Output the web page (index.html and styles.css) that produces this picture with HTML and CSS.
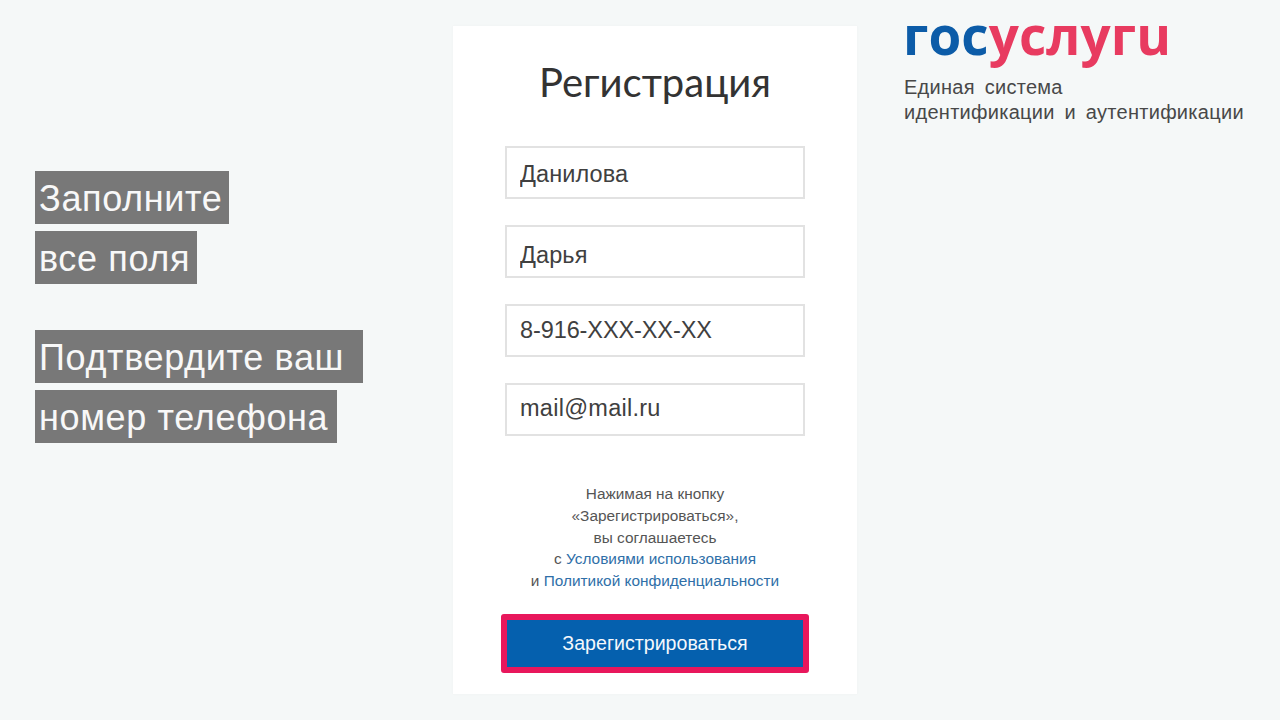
FILE: index.html
```html
<!DOCTYPE html>
<html lang="ru">
<head>
<meta charset="utf-8">
<title>Регистрация</title>
<link rel="stylesheet" href="styles.css">
</head>
<body>
<main class="page">
  <section class="notes">
    <div class="note-group">
      <span class="note">Заполните</span>
      <span class="note">все поля</span>
    </div>
    <div class="note-group">
      <span class="note note-wide">Подтвердите ваш</span>
      <span class="note note-mid">номер телефона</span>
    </div>
  </section>
  <section class="card">
    <h1 class="title">Регистрация</h1>
    <form class="fields">
      <input class="field field-down-1" value="Данилова">
      <input class="field field-down-2" value="Дарья">
      <input class="field field-phone" value="8-916-XXX-XX-XX">
      <input class="field field-mail" value="mail@mail.ru">
    </form>
    <p class="legal">Нажимая на кнопку<br>«Зарегистрироваться»,<br>вы соглашаетесь<br>с <a href="#">Условиями использования</a><br>и <a href="#">Политикой конфиденциальности</a></p>
    <button class="submit" type="button">Зарегистрироваться</button>
  </section>
  <aside class="brand">
    <div class="logo" aria-label="госуслуги"><span class="logo-blue">гос</span><span class="logo-red">услугu</span></div>
    <p class="tagline">Единая система<br>идентификации и аутентификации</p>
  </aside>
</main>
</body>
</html>
```
FILE: styles.css
```css
* { box-sizing: border-box; }
html, body { margin: 0; height: 720px; overflow: hidden; }
body { background: #f5f8f8; font-family: "Liberation Sans", Arial, sans-serif; color: #333; }
.page { display: grid; grid-template-columns: 418px 404px 1fr; padding: 0 0 0 35px; height: 720px; }

.notes { display: flex; flex-direction: column; gap: 46px; padding-top: 171px; }
.note-group { display: flex; flex-direction: column; align-items: flex-start; gap: 7px; }
.note { display: block; height: 53px; line-height: 56px; padding: 0 7px 0 4px; background: #787878; color: #f8f8f8; font-size: 36px; letter-spacing: 0.65px; white-space: nowrap; }
.note-wide { padding-right: 19px; }
.note-mid { padding-right: 9px; }

.card { width: 404px; height: 668px; margin-top: 26px; background: #fff; box-shadow: 0 0 2px #eef1f1; padding: 0 48px; display: flex; flex-direction: column; align-items: center; }
.title { margin: 31px 0 0; height: 89px; font: 400 40px/50px Lato, sans-serif; color: #333; text-align: center; }
.fields { display: flex; flex-direction: column; gap: 26px; width: 300px; }
.field { display: block; width: 300px; height: 53px; border: 2px solid #e2e2e2; background: #fff; padding: 0 12px 0 13px; font: 23.5px "Liberation Sans", Arial, sans-serif; letter-spacing: 0.1px; color: #404040; outline: none; }
.field-down-1 { padding-top: 4px; }
.field-down-2 { padding-top: 8px; }
.field-phone { letter-spacing: -0.1px; }
.field-mail { padding-bottom: 2px; letter-spacing: 0.27px; }

.legal { margin: 47px 0 0; width: 300px; font-size: 15.4px; line-height: 21.8px; text-align: center; color: #555; white-space: nowrap; }
.legal a { color: #2f6fa8; text-decoration: none; }

.submit { margin-top: 22px; flex: none; width: 308px; height: 59px; border: 6px solid #e8175c; border-radius: 3px; background: #0560ae; color: #f4f8fc; font: 19.6px "Liberation Sans", Arial, sans-serif; padding: 0; }

.brand { padding: 3px 0 0 46px; }
.logo { height: 73px; font: 700 53px/64px "Open Sans", sans-serif; letter-spacing: 0.1px; white-space: nowrap; }
.logo-blue { color: #0c5ca8; }
.logo-red { color: #e83b60; }
.tagline { margin: -1px 0 0 1px; font-size: 20px; line-height: 25px; color: #484848; word-spacing: 4px; letter-spacing: 0.28px; white-space: nowrap; }
```
